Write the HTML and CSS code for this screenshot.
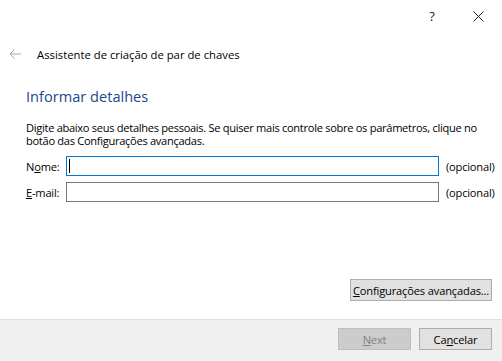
FILE: index.html
```html
<!DOCTYPE html>
<html lang="pt">
<head>
<meta charset="utf-8">
<title>Assistente de criação de par de chaves</title>
<link rel="stylesheet" href="styles.css">
</head>
<body>
<div class="window">
  <div class="titlebar">
    <div class="tb-btn help">?</div>
    <div class="tb-btn close">
      <svg width="11" height="11" viewBox="0 0 11 11"><path d="M0.5 0.5 L10.5 10.5 M10.5 0.5 L0.5 10.5" stroke="#222" stroke-width="1" fill="none"/></svg>
    </div>
  </div>
  <div class="header">
    <svg class="back" width="12" height="10" viewBox="0 0 12 10"><path d="M5.5 0.5 L1 5 L5.5 9.5 M1 5 H12" stroke="#a8a8a8" stroke-width="1" fill="none"/></svg>
    <span class="title">Assistente de criação de par de chaves</span>
  </div>
  <div class="main">
    <h1 class="heading">Informar detalhes</h1>
    <p class="intro">Digite abaixo seus detalhes pessoais. Se quiser mais controle sobre os parâmetros, clique no botão das Configurações avançadas.</p>
    <div class="form">
      <label class="lbl">N<u>o</u>me:</label>
      <div class="input focused"><span class="caret"></span></div>
      <span class="opt">(opcional)</span>
      <label class="lbl"><u>E</u>-mail:</label>
      <div class="input"></div>
      <span class="opt">(opcional)</span>
    </div>
    <div class="adv-row">
      <div class="btn adv"><u>C</u>onfigurações avançadas...</div>
    </div>
  </div>
  <div class="footer">
    <div class="btn disabled"><u>N</u>ext</div>
    <div class="btn">Ca<u>n</u>celar</div>
  </div>
</div>
</body>
</html>
```
FILE: styles.css
```css
html, body {
  margin: 0;
  padding: 0;
  background: #ffffff;
}
body {
  font-family: "Open Sans", "Noto Sans", sans-serif;
  font-size: 11.1px;
  color: #000000;
}
.window {
  width: 502px;
  height: 361px;
  display: flex;
  flex-direction: column;
  overflow: hidden;
}
.titlebar {
  height: 32px;
  display: flex;
  justify-content: flex-end;
  padding-right: 1px;
}
.tb-btn {
  width: 46px;
  height: 32px;
  display: flex;
  align-items: center;
  justify-content: center;
  font-size: 13px;
  color: #222;
}
.header {
  height: 44px;
  display: flex;
  align-items: center;
  padding-left: 9px;
}
.back {
  margin-right: 16px;
}
.title {
  font-size: 11.3px;
}
.main {
  flex: 1;
  display: flex;
  flex-direction: column;
  padding: 0 10px 0 26px;
}
.heading {
  margin: 9px 0 0 0;
  font-size: 14.6px;
  font-weight: normal;
  line-height: 22px;
  color: #23468c;
}
.intro {
  margin: 14px 0 0 0;
  line-height: 13px;
  letter-spacing: -0.3px;
}
.form {
  margin-top: 9px;
  display: grid;
  grid-template-columns: 40px 373px max-content;
  row-gap: 6px;
  align-items: center;
}
.lbl {
  display: block;
  letter-spacing: -0.2px;
}
.input {
  height: 18px;
  border: 1px solid #7a7a7a;
  background: #fff;
  display: flex;
  align-items: center;
  padding-left: 2px;
}
.input.focused {
  border-color: #0078d7;
}
.caret {
  width: 1px;
  height: 14px;
  background: #000;
}
.opt {
  white-space: nowrap;
  margin-left: 7px;
  letter-spacing: -0.2px;
}
.adv-row {
  margin-top: auto;
  margin-bottom: 18px;
  display: flex;
  justify-content: flex-end;
}
.btn {
  height: 20px;
  border: 1px solid #adadad;
  background: #e1e1e1;
  display: flex;
  align-items: center;
  justify-content: center;
  box-sizing: content-box;
  width: 71px;
  letter-spacing: -0.15px;
}
.btn.adv {
  width: 140px;
  white-space: nowrap;
}
.btn.disabled {
  background: #cccccc;
  border-color: #bfbfbf;
  color: #838383;
}
.footer {
  height: 42px;
  background: #f0f0f0;
  border-top: 1px solid #dfdfdf;
  display: flex;
  justify-content: flex-end;
  align-items: flex-start;
  gap: 8px;
  padding: 8px 10px 0 0;
  box-sizing: border-box;
}
```
